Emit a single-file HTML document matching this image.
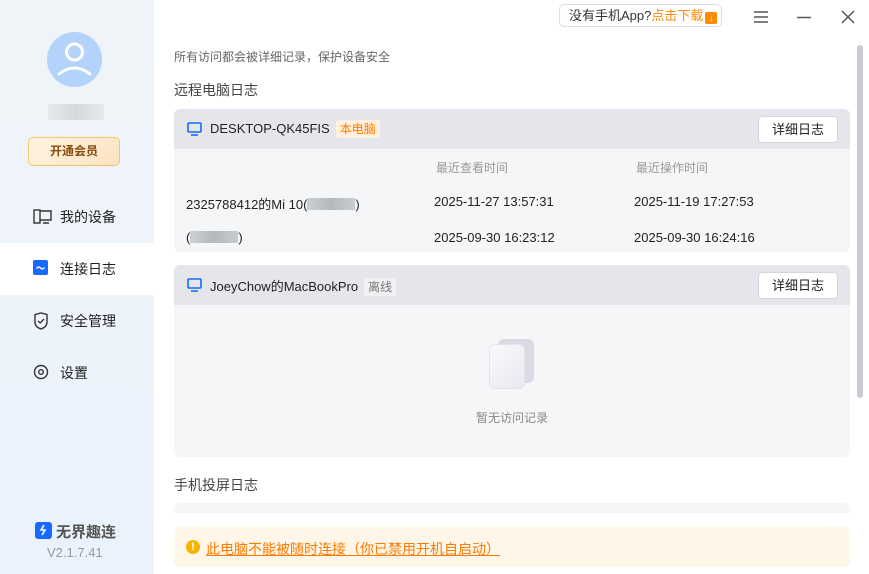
<!DOCTYPE html>
<html><head><meta charset="utf-8"><style>
*{margin:0;padding:0;box-sizing:border-box}
body{width:869px;height:574px;overflow:hidden;background:#fff;font-family:"Liberation Sans","Noto Sans CJK SC",sans-serif;color:#222;position:relative;font-size:13px}
.a{position:absolute;white-space:nowrap}
#side{position:absolute;left:0;top:0;width:154px;height:574px;background:linear-gradient(180deg,#f0f4f8 0%,#eaf3fd 100%)}
.nav{position:absolute;left:0;width:154px;height:52px;font-size:14px;color:#222}
.nav span{position:absolute;left:60px;top:16px}
.nav svg{position:absolute;left:33px;top:17px}
.card{position:absolute;left:174px;width:676px;border-radius:6px;background:#f5f6f8;overflow:hidden}
.hd{height:40px;background:#e4e6eb;position:relative}
.btn{position:absolute;right:12px;top:7px;width:80px;height:27px;border:1px solid #d3d6dc;border-radius:4px;background:#fff;font-size:13px;text-align:center;line-height:25px}
.tag{display:inline-block;padding:0 4px;height:18px;line-height:18px;font-size:12px;border-radius:3px;margin-left:6px}
.blur{display:inline-block;height:12px;background:linear-gradient(90deg,#ccd0d4,#b5b8bd,#c8cbcf);vertical-align:-1px}
</style></head><body>
<div id="side">
  <div class="a" style="left:47px;top:32px;width:55px;height:55px;border-radius:50%;background:#b3d3fb"></div>
  <svg class="a" style="left:47px;top:32px" width="55" height="55" viewBox="0 0 55 55"><circle cx="27.5" cy="20" r="8" fill="none" stroke="#fff" stroke-width="3"/><path d="M12 42 Q27.5 30 43 42" fill="none" stroke="#fff" stroke-width="3" stroke-linecap="round"/></svg>
  <div class="a" style="left:48px;top:104px;width:56px;height:16px;background:linear-gradient(90deg,#e6e9ec,#d5d8dc,#e6e9ec)"></div>
  <div class="a" style="left:28px;top:137px;width:92px;height:29px;border:1px solid #f7c46b;border-radius:5px;background:linear-gradient(135deg,#fff4e2,#fbe3c3);color:#8a4b0a;font-weight:bold;font-size:12px;text-align:center;line-height:27px">开通会员</div>
  <div class="nav" style="top:191px"><svg width="20" height="18" viewBox="0 0 20 18"><rect x="1" y="2" width="6" height="13" fill="none" stroke="#333" stroke-width="1.4"/><path d="M7 3h11v9H7M10 15h6" fill="none" stroke="#333" stroke-width="1.4"/></svg><span>我的设备</span></div>
  <div class="nav" style="top:243px;background:#fff"><svg width="16" height="16" viewBox="0 0 16 16"><rect width="15" height="15" rx="2" fill="#1769ff"/><path d="M3.5 8.5 Q5.5 6 7.5 8 T11.5 7.5" fill="none" stroke="#fff" stroke-width="1.4"/></svg><span>连接日志</span></div>
  <div class="nav" style="top:295px"><svg width="16" height="18" viewBox="0 0 16 18"><path d="M2 2.5 L8 1 L14 2.5 V10 Q14 15 8 17 Q2 15 2 10Z" fill="none" stroke="#333" stroke-width="1.4"/><path d="M5 9l2.2 2L11 7" fill="none" stroke="#333" stroke-width="1.3"/></svg><span>安全管理</span></div>
  <div class="nav" style="top:347px"><svg width="16" height="16" viewBox="0 0 16 16"><circle cx="8" cy="8" r="6.5" fill="none" stroke="#333" stroke-width="1.4"/><circle cx="8" cy="8" r="2.3" fill="none" stroke="#333" stroke-width="1.4"/></svg><span>设置</span></div>
  <svg class="a" style="left:35px;top:522px" width="17" height="17" viewBox="0 0 17 17"><rect width="17" height="17" rx="3" fill="#1769ff"/><path d="M9 3L6 8h4l-3 5" fill="none" stroke="#fff" stroke-width="1.6"/></svg>
  <div class="a" style="left:56px;top:521px;font-size:15px;color:#555;font-weight:bold">无界趣连</div>
  <div class="a" style="left:47px;top:545px;font-size:13px;color:#999">V2.1.7.41</div>
</div>
<div class="a" style="left:559px;top:4px;width:163px;height:23px;border:1px solid #ddd;border-radius:5px;font-size:13px;line-height:21px;padding-left:9px;color:#333">没有手机App?<span style="color:#ff8a00">点击下载</span><span style="display:inline-block;width:12px;height:12px;background:#ff8a00;border-radius:2px;color:#fff;font-size:9px;line-height:12px;text-align:center;margin-left:2px;vertical-align:-1px">↓</span></div>
<svg class="a" style="left:753px;top:10px" width="16" height="14"><path d="M1 2h14M1 7h14M1 12h14" stroke="#555" stroke-width="1.5"/></svg>
<svg class="a" style="left:797px;top:10px" width="14" height="14"><path d="M0 7.5h14" stroke="#555" stroke-width="1.5"/></svg>
<svg class="a" style="left:841px;top:10px" width="14" height="14"><path d="M1 1l12 12M13 1L1 13" stroke="#555" stroke-width="1.5"/></svg>
<div class="a" style="left:174px;top:48px;font-size:12px;color:#666">所有访问都会被详细记录，保护设备安全</div>
<div class="a" style="left:174px;top:80px;font-size:14px;color:#444">远程电脑日志</div>
<div class="card" style="top:109px;height:143px">
  <div class="hd"><svg class="a" style="left:13px;top:13px" width="15" height="14"><rect x="1" y="1" width="13" height="9" rx="1" fill="none" stroke="#1769ff" stroke-width="1.6"/><path d="M4 13h7" stroke="#1769ff" stroke-width="1.6"/></svg>
  <div class="a" style="left:36px;top:11px;font-size:13px">DESKTOP-QK45FIS<span class="tag" style="background:#fff1dd;color:#ff7a00">本电脑</span></div><div class="btn">详细日志</div></div>
  <div class="a" style="left:262px;top:50px;font-size:12px;color:#999">最近查看时间</div>
  <div class="a" style="left:462px;top:50px;font-size:12px;color:#999">最近操作时间</div>
  <div class="a" style="left:12px;top:85px">2325788412的Mi 10(<span class="blur" style="width:48px"></span>)</div>
  <div class="a" style="left:260px;top:85px">2025-11-27 13:57:31</div>
  <div class="a" style="left:460px;top:85px">2025-11-19 17:27:53</div>
  <div class="a" style="left:12px;top:121px">(<span class="blur" style="width:48px"></span>)</div>
  <div class="a" style="left:260px;top:121px">2025-09-30 16:23:12</div>
  <div class="a" style="left:460px;top:121px">2025-09-30 16:24:16</div>
</div>
<div class="card" style="top:265px;height:192px">
  <div class="hd"><svg class="a" style="left:13px;top:13px" width="15" height="14"><rect x="1" y="1" width="13" height="9" rx="1" fill="none" stroke="#1769ff" stroke-width="1.6"/><path d="M4 13h7" stroke="#1769ff" stroke-width="1.6"/></svg>
  <div class="a" style="left:36px;top:11px;font-size:13px">JoeyChow的MacBookPro<span class="tag" style="background:#f0f1f3;color:#777">离线</span></div><div class="btn">详细日志</div></div>
  <div class="a" style="left:324px;top:74px;width:36px;height:44px;border-radius:6px;background:#d9dae3"></div>
  <div class="a" style="left:315px;top:79px;width:36px;height:45px;border-radius:6px;background:linear-gradient(135deg,#fafafc,#e8e8f0);border:1px solid #e3e4ec"></div>
  <div class="a" style="left:302px;top:144px;font-size:12px;color:#888">暂无访问记录</div>
</div>
<div class="a" style="left:174px;top:475px;font-size:14px;color:#444">手机投屏日志</div>
<div class="a" style="left:174px;top:503px;width:676px;height:10px;background:#f5f6f8;border-radius:6px 6px 0 0"></div>
<div class="a" style="left:857px;top:45px;width:6px;height:353px;border-radius:3px;background:#c9ccd3"></div>
<div class="a" style="left:174px;top:527px;width:676px;height:40px;border-radius:6px;background:#fff6e8"></div>
<div class="a" style="left:186px;top:540px;width:14px;height:14px;border-radius:50%;background:#f5b400;color:#fff;font-size:11px;font-weight:bold;text-align:center;line-height:14px">!</div>
<div class="a" style="left:206px;top:539px;font-size:14px;color:#ff7a00;text-decoration:underline">此电脑不能被随时连接（你已禁用开机自启动）</div>
</body></html>
